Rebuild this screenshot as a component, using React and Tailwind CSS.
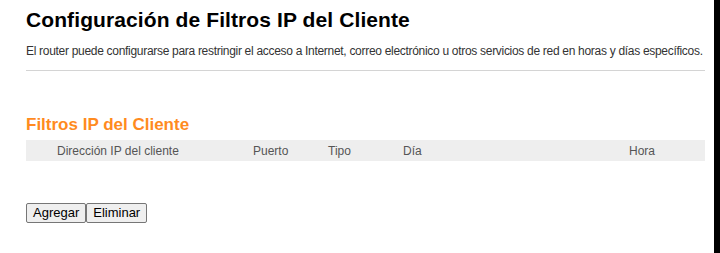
import React from 'react';

const Header = () => (
    <div className="flex items-center h-[21px] bg-[#eeeeee] text-[12px] text-[#555555]">
        <div className="w-[31px]" />
        <div className="w-[196px]">Dirección IP del cliente</div>
        <div className="w-[75px]">Puerto</div>
        <div className="w-[75px]">Tipo</div>
        <div className="flex-1">Día</div>
        <div className="w-[76px]">Hora</div>
    </div>
);

export default function App() {
    return (
        <div className="flex h-[253px] w-[720px] bg-white font-['Liberation_Sans',Arial,sans-serif]">
            <main className="flex-1 pl-[26px] pr-[9px]">
                {/* Title */}
                <h1 className="pt-[6px] text-[21px] leading-[28px] font-bold text-black tracking-[0.1px]">
                    Configuración de Filtros IP del Cliente
                </h1>
                <p className="mt-[10px] whitespace-nowrap text-[12px] leading-[14px] tracking-[-0.3px] text-[#333333]">
                    El router puede configurarse para restringir el acceso a Internet, correo electrónico u otros servicios de red en horas y días específicos.
                </p>
                <div className="mt-[12px] border-t border-[#d4d4d4]" />

                {/* Filter section */}
                <h2 className="mt-[44px] text-[17px] leading-[20px] font-bold text-[#ff8b1f]">
                    Filtros IP del Cliente
                </h2>
                <div className="mt-[5px]">
                    <Header />
                </div>

                <div className="mt-[42px] flex">
                    <button className="h-[20px] px-[6px] text-[13px] leading-[16px] text-black bg-[#efefef] border border-[#767676] rounded-[2px]">
                        Agregar
                    </button>
                    <button className="h-[20px] px-[6px] text-[13px] leading-[16px] text-black bg-[#efefef] border border-[#767676] rounded-[2px]">
                        Eliminar
                    </button>
                </div>
            </main>
            <div className="w-[6px] bg-black" />
        </div>
    );
}
